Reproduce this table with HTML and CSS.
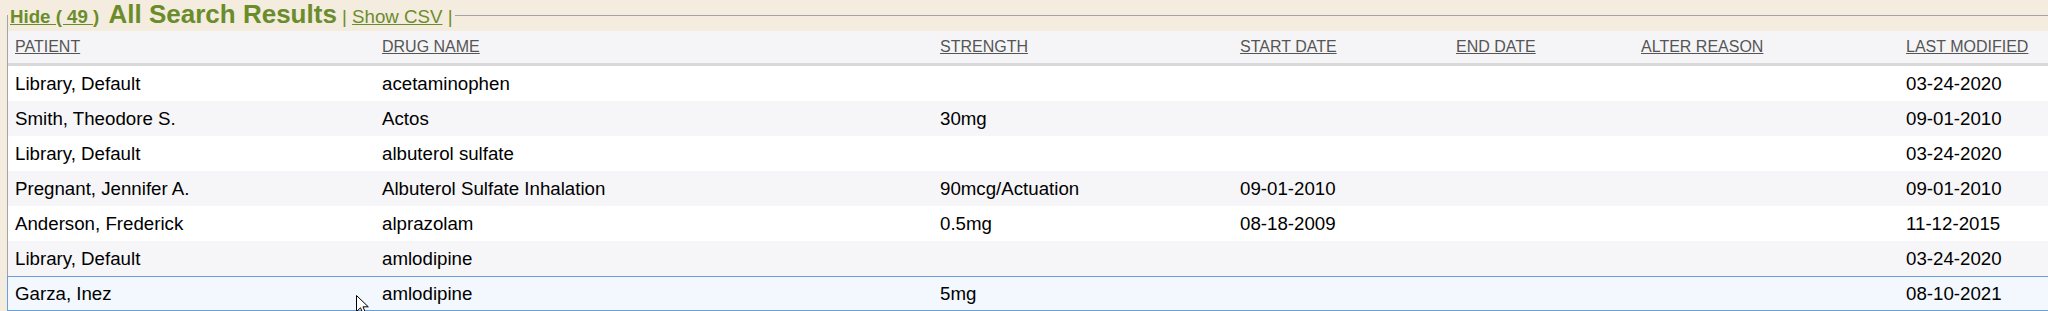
FILE: index.html
```html
<!DOCTYPE html>
<html lang="en">
<head>
<meta charset="utf-8">
<title>All Search Results</title>
<link rel="stylesheet" href="styles.css">
</head>
<body>
<fieldset class="results">
  <legend class="legend"><a class="link hide" href="#">Hide ( 49 </a><span class="paren">)</span> <span class="title">All Search Results</span> | <a class="link" href="#">Show CSV</a> | </legend>
  <div class="grid">
    <div class="row head">
      <div class="cell"><a href="#">PATIENT</a></div>
      <div class="cell"><a href="#">DRUG NAME</a></div>
      <div class="cell"><a href="#">STRENGTH</a></div>
      <div class="cell"><a href="#">START DATE</a></div>
      <div class="cell"><a href="#">END DATE</a></div>
      <div class="cell"><a href="#">ALTER REASON</a></div>
      <div class="cell"><a href="#">LAST MODIFIED</a></div>
    </div>
    <div class="row">
      <div class="cell">Library, Default</div><div class="cell">acetaminophen</div><div class="cell"></div><div class="cell"></div><div class="cell"></div><div class="cell"></div><div class="cell">03-24-2020</div>
    </div>
    <div class="row alt">
      <div class="cell">Smith, Theodore S.</div><div class="cell">Actos</div><div class="cell">30mg</div><div class="cell"></div><div class="cell"></div><div class="cell"></div><div class="cell">09-01-2010</div>
    </div>
    <div class="row">
      <div class="cell">Library, Default</div><div class="cell">albuterol sulfate</div><div class="cell"></div><div class="cell"></div><div class="cell"></div><div class="cell"></div><div class="cell">03-24-2020</div>
    </div>
    <div class="row alt">
      <div class="cell">Pregnant, Jennifer A.</div><div class="cell">Albuterol Sulfate Inhalation</div><div class="cell">90mcg/Actuation</div><div class="cell">09-01-2010</div><div class="cell"></div><div class="cell"></div><div class="cell">09-01-2010</div>
    </div>
    <div class="row">
      <div class="cell">Anderson, Frederick</div><div class="cell">alprazolam</div><div class="cell">0.5mg</div><div class="cell">08-18-2009</div><div class="cell"></div><div class="cell"></div><div class="cell">11-12-2015</div>
    </div>
    <div class="row alt">
      <div class="cell">Library, Default</div><div class="cell">amlodipine</div><div class="cell"></div><div class="cell"></div><div class="cell"></div><div class="cell"></div><div class="cell">03-24-2020</div>
    </div>
    <div class="row selected">
      <div class="cell">Garza, Inez</div><div class="cell">amlodipine</div><div class="cell">5mg</div><div class="cell"></div><div class="cell"></div><div class="cell"></div><div class="cell">08-10-2021</div>
    </div>
  </div>
</fieldset>
<svg class="cursor" width="14" height="22" viewBox="0 0 14 22" aria-hidden="true">
  <path d="M0.5 0.5 L0.5 16.5 L4.5 12.8 L7.2 19 L9.6 18 L7 11.8 L12.3 11.8 Z" fill="#fff" stroke="#000" stroke-width="1"/>
</svg>
</body>
</html>
```
FILE: styles.css
```css
html, body {
  margin: 0;
  padding: 0;
}
body {
  background: #f4ecdf;
  font-family: "Liberation Sans", Arial, sans-serif;
  overflow: hidden;
  width: 2048px;
  height: 311px;
  position: relative;
}
.results {
  margin: 0 0 0 7px;
  padding: 0;
  border: 1px solid #a3a3a3;
  border-bottom: none;
  width: 2140px;
  min-width: 0;
  box-sizing: border-box;
}
.legend {
  padding: 0 2px;
  margin: 0;
  font-size: 18.7px;
  line-height: 29px;
  color: #6b8c2b;
  white-space: nowrap;
}
.link {
  color: #6b8c2b;
  text-decoration: underline;
}
.hide,
.paren {
  font-weight: bold;
}
.title {
  font-size: 26px;
  font-weight: bold;
  margin-left: 4px;
}
.grid {
  display: flex;
  flex-direction: column;
}
.row {
  display: grid;
  grid-template-columns: 367px 558px 300px 216px 185px 265px 240px;
  height: 35px;
  align-items: center;
  background: #ffffff;
  font-size: 18.7px;
  color: #000;
  box-sizing: border-box;
}
.row.alt {
  background: #f6f6f8;
}
.row.head {
  height: 35px;
  background: #f5f5f7;
  border-bottom: 3px solid #d9d9d9;
  font-size: 16px;
}
.row.head a {
  color: #555;
  text-decoration: underline;
}
.row.selected {
  background: #f2f8fe;
  border: 1px solid #6a9fd8;
  margin-left: -1px;
}
.cell {
  padding-left: 7px;
  white-space: nowrap;
}
.cursor {
  position: absolute;
  left: 356px;
  top: 295px;
}
```
